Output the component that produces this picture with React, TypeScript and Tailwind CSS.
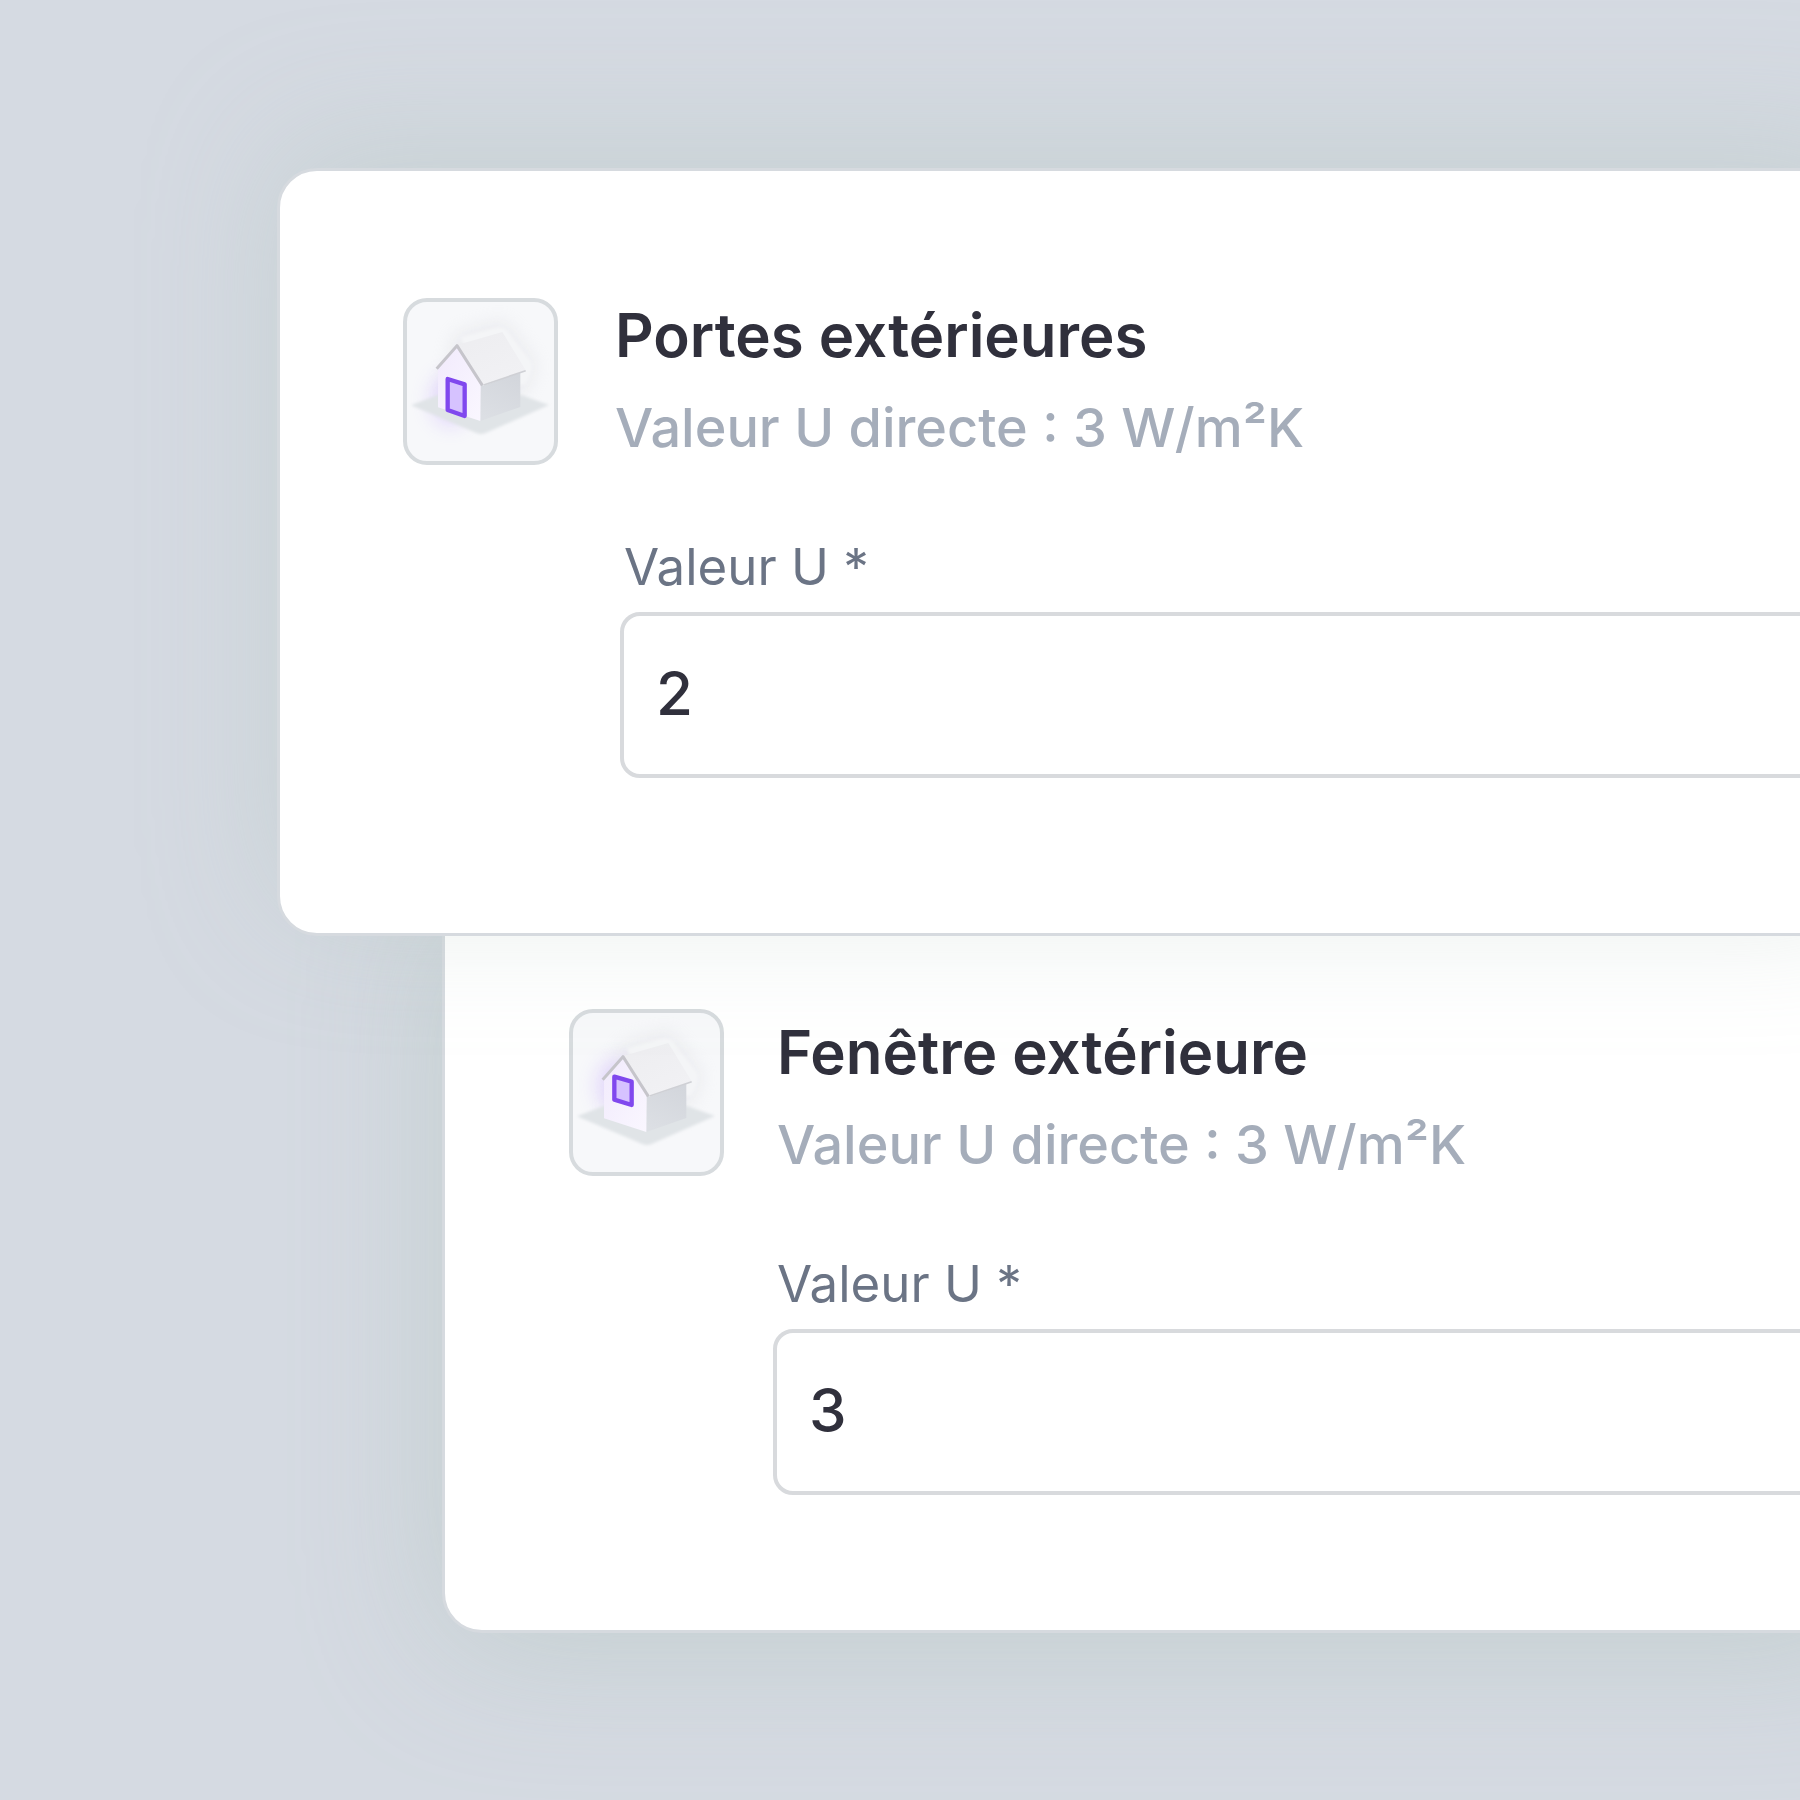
import { useId } from "react";

type Opening = "door" | "window";

const openings: Record<Opening, string> = {
  door: "M176 283 L227 299 L227 394 L176 376 Z",
  window: "M178 243 L230 258 L230 328 L178 312 Z",
};

function HouseIcon({ opening }: { opening: Opening }) {
  const id = useId();

  return (
    <svg viewBox="54 52 441 477" className="block h-full w-full" aria-hidden="true">
      <defs>
        <filter id={`${id}-soft`} x="-60%" y="-60%" width="220%" height="220%">
          <feGaussianBlur stdDeviation="28" />
        </filter>
        <filter id={`${id}-edge`} x="-20%" y="-20%" width="140%" height="140%">
          <feGaussianBlur stdDeviation="4" />
        </filter>
        <linearGradient id={`${id}-roof`} x1="0" y1="0" x2="0.6" y2="1">
          <stop offset="0" stopColor="#ededf0" />
          <stop offset="1" stopColor="#f1f1f4" />
        </linearGradient>
        <linearGradient id={`${id}-side`} x1="0.7" y1="0" x2="0.3" y2="1">
          <stop offset="0" stopColor="#d3d6dc" />
          <stop offset="1" stopColor="#dcdfe4" />
        </linearGradient>
        <linearGradient id={`${id}-front`} x1="0" y1="0" x2="1" y2="1">
          <stop offset="0" stopColor="#f1eafc" />
          <stop offset="1" stopColor="#faf7ff" />
        </linearGradient>
      </defs>

      {/* Halo */}
      <path
        d="M200 150 L345 110 L440 240 L400 330 L160 360 Z"
        fill="#d5d5dc"
        opacity="0.4"
        filter={`url(#${id}-soft)`}
      />
      <ellipse
        cx="185"
        cy={opening === "door" ? 345 : 270}
        rx="60"
        ry="80"
        fill="#cdb2ff"
        opacity="0.45"
        filter={`url(#${id}-soft)`}
      />
      <path
        d="M215 158 L325 128 Q350 125 362 148 L424 228 Q438 256 408 300 L280 300 Z"
        fill="#f4f5f7"
        filter={`url(#${id}-edge)`}
      />

      {/* Ground */}
      <path
        d="M66 362 L146 331 L395 330 L480 361 L288 446 Q274 451 260 444 Z"
        fill="#e0e4e7"
        filter={`url(#${id}-edge)`}
      />

      {/* Walls and roof */}
      <path d="M274 300 L394 262 L394 367 L274 409 Z" fill={`url(#${id}-side)`} />
      <path d="M204 184 L275 298 L274 409 L147 368 L147 248 Z" fill={`url(#${id}-front)`} />
      <path d="M204 181 L340 142 L411 258 L284 303 Z" fill={`url(#${id}-roof)`} />
      <path d="M284 301 L410 258" stroke="#cfd0d5" strokeWidth="5" fill="none" />
      <path
        d="M143 252 L204 183 L280 302"
        stroke="#c6c5cb"
        strokeWidth="9"
        strokeLinejoin="round"
        fill="none"
      />

      <path
        d={openings[opening]}
        fill="#d6c2ff"
        stroke="#8048ee"
        strokeWidth="13"
        strokeLinejoin="round"
      />
    </svg>
  );
}

function IconTile({ opening }: { opening: Opening }) {
  return (
    <div className="h-[167px] w-[155px] shrink-0 overflow-hidden rounded-3xl border-4 border-[#d7dbde] bg-[#f7f8fa]">
      <HouseIcon opening={opening} />
    </div>
  );
}

function Heading({ title, subtitle }: { title: string; subtitle: string }) {
  return (
    <div className="whitespace-nowrap">
      <h2 className="text-[60px] leading-[74px] font-semibold text-[#30303c]">{title}</h2>
      <p className="mt-5 text-[54px] leading-[72px] font-medium text-[#a5adba]">{subtitle}</p>
    </div>
  );
}

function Field({ id, value }: { id: string; value: string }) {
  return (
    <div className="flex flex-col">
      <label htmlFor={id} className="mb-2.5 pl-1 text-[51px] leading-[70px] text-[#6b7485]">
        Valeur U *
      </label>
      <input
        id={id}
        type="text"
        defaultValue={value}
        className="h-[166px] w-full rounded-[20px] border-4 border-[#d8dadd] bg-white px-8 pb-1 text-[60px] font-medium text-[#30303c] outline-none"
      />
    </div>
  );
}

export default function App() {
  return (
    <main className="min-h-screen overflow-hidden bg-[#d5dae2] pt-[168px] pb-[167px] font-['Inter',sans-serif]">
      {/* Doors */}
      <section className="relative z-10 -mr-20 ml-[277px] rounded-[40px] border-[3px] border-[#d6dadf] bg-white pt-[127px] pb-[155px] pl-[123px] shadow-[0_-24px_130px_rgba(172,192,184,0.34)]">
        <div className="flex gap-[57px]">
          <IconTile opening="door" />
          <Heading title="Portes extérieures" subtitle="Valeur U directe : 3 W/m²K" />
        </div>
        <div className="mt-[67px] ml-[217px]">
          <Field id="door-u-value" value="2" />
        </div>
      </section>

      {/* Windows */}
      <section className="-mt-10 -mr-20 ml-[442px] rounded-[40px] border-[3px] border-[#d6dadf] bg-white pt-[110px] pb-[135px] pl-[124px] shadow-[0_12px_140px_rgba(172,192,184,0.45)]">
        <div className="flex gap-[53px]">
          <IconTile opening="window" />
          <div className="pt-1.5">
            <Heading title="Fenêtre extérieure" subtitle="Valeur U directe : 3 W/m²K" />
          </div>
        </div>
        <div className="mt-[68px] ml-[204px]">
          <Field id="window-u-value" value="3" />
        </div>
      </section>
    </main>
  );
}
